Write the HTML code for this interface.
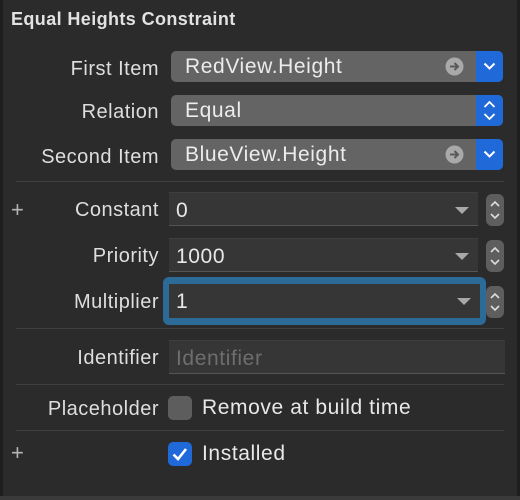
<!DOCTYPE html>
<html><head><style>
*{margin:0;padding:0;box-sizing:border-box}
body{width:520px;height:500px;background:#2b2b2b;position:relative;overflow:hidden;font-family:"Liberation Sans",sans-serif;color:#dcdcdc}
.a{position:absolute}
.lbl{position:absolute;right:361px;font-size:20px;letter-spacing:0.5px;color:#dedede;white-space:nowrap}
.sep{position:absolute;left:16px;width:488px;height:1px;background:#3f3f3f}
.pop{position:absolute;left:171px;width:332px;height:31px;background:#646464;border-radius:5px;overflow:hidden;font-size:21px;letter-spacing:0.6px;color:#ececec}
.pop span{position:absolute;left:14px;top:4px}
.blue{position:absolute;right:0;top:0;width:27px;height:31px;background:#1f6ad8}
.fld{position:absolute;left:169px;width:309px;height:34px;background:#363636;border-top:1px solid #3e3e3e;border-bottom:1px solid #555;font-size:21px;letter-spacing:0.6px;color:#e8e8e8}
.fld span{position:absolute;left:7px;top:6px}
.tri{position:absolute;right:9px;top:14px;width:0;height:0;border-left:7px solid transparent;border-right:7px solid transparent;border-top:7px solid #a8a8a8}
.step{position:absolute;left:486px;width:18px;height:32px;background:#5e5e5e;border-radius:6px}
.plus{position:absolute;left:11px;font-size:22px;color:#b5b5b5;font-weight:300}
</style></head><body>
<div class="a" style="left:0;top:0;width:3px;height:500px;background:#1e1e1e"></div>
<div class="a" style="left:517px;top:0;width:3px;height:500px;background:#1e1e1e"></div>
<div class="a" style="left:0;top:496px;width:520px;height:4px;background:#3a3a3a"></div>
<div class="a" style="left:11px;top:9px;font-size:18px;letter-spacing:0.4px;font-weight:bold;color:#e2e2e2">Equal Heights Constraint</div>

<div class="lbl" style="top:58px">First Item</div>
<div class="pop" style="top:51px"><span>RedView.Height</span>
<svg class="a" style="left:274px;top:6px" width="19" height="19" viewBox="0 0 19 19"><circle cx="9.5" cy="9.5" r="9" fill="#a9a9a9"/><path d="M5 9.5h8M9.5 6l3.5 3.5-3.5 3.5" stroke="#5a5a5a" stroke-width="2" fill="none"/></svg>
<div class="blue"><svg class="a" style="left:7px;top:10px" width="13" height="10"><path d="M1.5 2.5l5 5 5-5" stroke="#fff" stroke-width="2" fill="none"/></svg></div></div>

<div class="lbl" style="top:101px">Relation</div>
<div class="pop" style="top:95px"><span>Equal</span>
<div class="blue"><svg class="a" style="left:7px;top:5px" width="13" height="22"><path d="M1.5 7l5-5 5 5M1.5 14l5 5 5-5" stroke="#fff" stroke-width="1.8" fill="none"/></svg></div></div>

<div class="lbl" style="top:146px">Second Item</div>
<div class="pop" style="top:139px"><span>BlueView.Height</span>
<svg class="a" style="left:274px;top:6px" width="19" height="19" viewBox="0 0 19 19"><circle cx="9.5" cy="9.5" r="9" fill="#a9a9a9"/><path d="M5 9.5h8M9.5 6l3.5 3.5-3.5 3.5" stroke="#5a5a5a" stroke-width="2" fill="none"/></svg>
<div class="blue"><svg class="a" style="left:7px;top:10px" width="13" height="10"><path d="M1.5 2.5l5 5 5-5" stroke="#fff" stroke-width="2" fill="none"/></svg></div></div>

<div class="sep" style="top:181px"></div>

<div class="plus" style="top:197px">+</div>
<div class="lbl" style="top:199px">Constant</div>
<div class="fld" style="top:192px"><span>0</span><div class="tri"></div></div>
<div class="step" style="top:194px"><svg class="a" style="left:3px;top:4px" width="12" height="24"><path d="M2 8l4-4 4 4M2 16l4 4 4-4" stroke="#ddd" stroke-width="1.6" fill="none"/></svg></div>

<div class="lbl" style="top:245px">Priority</div>
<div class="fld" style="top:238px"><span>1000</span><div class="tri"></div></div>
<div class="step" style="top:240px"><svg class="a" style="left:3px;top:4px" width="12" height="24"><path d="M2 8l4-4 4 4M2 16l4 4 4-4" stroke="#ddd" stroke-width="1.6" fill="none"/></svg></div>

<div class="lbl" style="top:291px">Multiplier</div>
<div class="a" style="left:163px;top:277px;width:323px;height:48px;background:#2c6a98;border-radius:6px"></div>
<div class="fld" style="top:284px;left:169px;width:311px;border:none"><span>1</span><div class="tri"></div></div>
<div class="step" style="top:286px"><svg class="a" style="left:3px;top:4px" width="12" height="24"><path d="M2 8l4-4 4 4M2 16l4 4 4-4" stroke="#ddd" stroke-width="1.6" fill="none"/></svg></div>

<div class="sep" style="top:328px"></div>

<div class="lbl" style="top:347px">Identifier</div>
<div class="fld" style="top:340px;width:336px"><span style="color:#6e6e6e">Identifier</span></div>

<div class="sep" style="top:384px"></div>

<div class="lbl" style="top:398px">Placeholder</div>
<div class="a" style="left:168px;top:396px;width:24px;height:24px;background:#5d5d5d;border-radius:5px"></div>
<div class="a" style="left:202px;top:396px;font-size:21px;letter-spacing:0.6px;color:#e8e8e8">Remove at build time</div>

<div class="sep" style="top:430px"></div>

<div class="plus" style="top:440px">+</div>
<div class="a" style="left:168px;top:442px;width:24px;height:24px;background:#1f6ad8;border-radius:5px"><svg class="a" style="left:3px;top:4px" width="18" height="16"><path d="M2.5 8.5l4.5 4.5 8-10" stroke="#fff" stroke-width="2.6" fill="none"/></svg></div>
<div class="a" style="left:202px;top:442px;font-size:21px;letter-spacing:0.6px;color:#e8e8e8">Installed</div>
</body></html>
